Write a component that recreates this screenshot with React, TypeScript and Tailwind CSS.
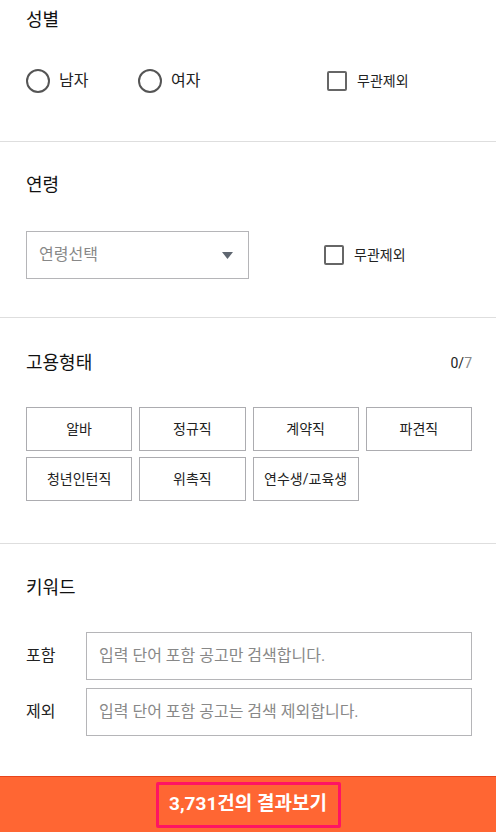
import React from "react";

const font = { fontFamily: "Roboto, 'Noto Sans CJK KR', sans-serif" };

const Radio: React.FC<{ label: string }> = ({ label }) => (
    <label className="flex items-center gap-[9px] w-[112px]">
        <span className="w-6 h-6 rounded-full border-2 border-[#555]" />
        <span className="text-[16px] text-[#222] leading-6">{label}</span>
    </label>
);

const Check: React.FC = () => (
    <label className="flex items-center gap-[10px]">
        <span className="w-5 h-5 rounded-[2px] border-2 border-[#666]" />
        <span className="text-[14px] text-[#222] leading-5">무관제외</span>
    </label>
);

const types = ["알바", "정규직", "계약직", "파견직", "청년인턴직", "위촉직", "연수생/교육생"];

export default function App() {
    return (
        <div className="relative w-[496px] h-[832px] bg-white overflow-hidden" style={font}>
            <section className="px-[26px] pt-2 pb-[48px] border-b border-[#dedede]">
                <h2 className="text-[18px] leading-6 text-[#111]">성별</h2>
                <div className="flex items-center mt-[37px]">
                    <Radio label="남자" />
                    <Radio label="여자" />
                    <div className="ml-[77px]">
                        <Check />
                    </div>
                </div>
            </section>

            <section className="px-[26px] pt-[31px] pb-[38px] border-b border-[#dedede]">
                <h2 className="text-[18px] leading-6 text-[#111]">연령</h2>
                <div className="flex items-center mt-[34px]">
                    <div className="w-[223px] h-12 border border-[#b5b5b8] flex items-center justify-between pl-3 pr-[15px]">
                        <span className="text-[16px] text-[#888]">연령선택</span>
                        <svg width="11" height="7" viewBox="0 0 11 7">
                            <path d="M0 0H11L5.5 7Z" fill="#5f6670" />
                        </svg>
                    </div>
                    <div className="ml-[75px]">
                        <Check />
                    </div>
                </div>
            </section>

            <section className="px-[24px] pt-[33px] pb-[42px] border-b border-[#dedede]">
                <div className="flex items-center justify-between pl-[2px]">
                    <h2 className="text-[18px] leading-6 text-[#111]">고용형태</h2>
                    <span className="text-[14px] text-[#222]">
                        0/<span className="text-[#888]">7</span>
                    </span>
                </div>
                <div className="grid grid-cols-4 gap-x-[7px] gap-y-[6px] mt-[32px] pl-[2px]">
                    {types.map((t) => (
                        <button
                            key={t}
                            className="h-[44px] border border-[#acacb0] text-[14px] text-[#222] bg-white"
                        >
                            {t}
                        </button>
                    ))}
                </div>
            </section>

            <section className="pl-[26px] pr-[24px] pt-[32px]">
                <h2 className="text-[18px] leading-6 text-[#111]">키워드</h2>
                <div className="flex flex-col gap-2 mt-[32px]">
                    <div className="flex items-center">
                        <span className="w-[60px] text-[16px] text-[#222]">포함</span>
                        <div className="flex-1 h-12 border border-[#b5b5b8] flex items-center px-3 text-[16px] text-[#888]">
                            입력 단어 포함 공고만 검색합니다.
                        </div>
                    </div>
                    <div className="flex items-center">
                        <span className="w-[60px] text-[16px] text-[#222]">제외</span>
                        <div className="flex-1 h-12 border border-[#b5b5b8] flex items-center px-3 text-[16px] text-[#888]">
                            입력 단어 포함 공고는 검색 제외합니다.
                        </div>
                    </div>
                </div>
            </section>

            <div className="absolute left-0 right-0 bottom-0 h-[56px] bg-[#ff6633] border-t border-[#e8441c] flex items-center justify-center">
                <div className="w-[185px] h-[46px] border-[3px] border-[#ff1463] rounded-[2px] flex items-center justify-center">
                    <span className="text-[19px] font-bold text-white">3,731건의 결과보기</span>
                </div>
            </div>
        </div>
    );
}
